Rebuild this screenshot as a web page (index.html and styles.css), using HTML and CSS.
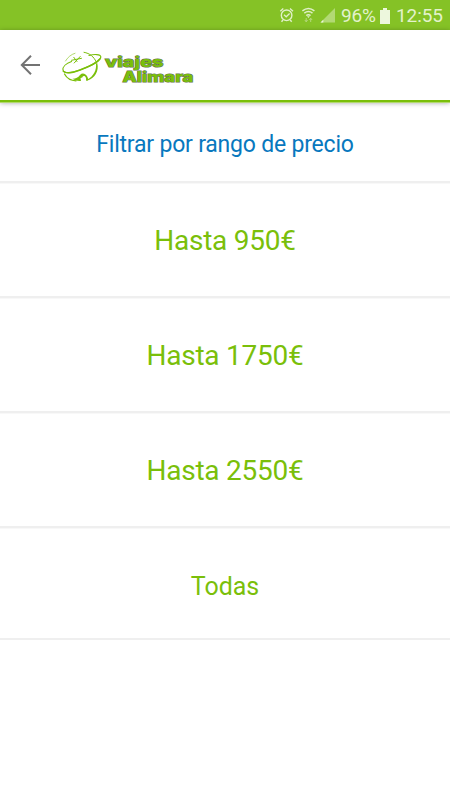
FILE: index.html
```
<!DOCTYPE html>
<html lang="es">
<head>
<meta charset="utf-8">
<title>Viajes Alimara</title>
<link rel="stylesheet" href="styles.css">
</head>
<body>
<div class="status">
  <svg class="status-icons" width="60" height="30" viewBox="278 0 60 30" fill="none" stroke="#e0f0c8">
    <circle cx="286.600" cy="15.300" r="5.300" stroke-width="1.400"/>
    <path d="M280.300 11.300l3-2.700M290 8.600l3 2.700M283 20l-1.500 1.800M290.200 20l1.500 1.800" stroke-width="1.400"/>
    <path d="M284 14.800l2.200 2 3.400-3.300" stroke-width="1.300"/>
    <path d="M302.400 10.800q6-4.800 12 0M304.300 13.200q4.100-3.200 8.200 0M306.200 15.500q2.200-1.700 4.400 0" stroke-width="1.500"/>
    <path d="M307 16.200h2.800l-1.400 1.800z" fill="#e0f0c8" stroke="none"/>
    <path d="M306.200 18v4M304.800 20l1.400 1.800 1.400-1.800M310.700 22v-4M309.300 20l1.400-1.800 1.400 1.800" stroke="#b4d87a" stroke-width="1"/>
    <path d="M335 8v14.500h-14.500z" fill="#b2d974" stroke="none"/>
    <path d="M323.300 19.700v2.800h-2.800z" fill="#eaf5da" stroke="none"/>
  </svg>
  <span class="percent">96%</span>
  <svg class="battery" width="10" height="16" viewBox="0 0 10 16" fill="#edf7dd"><path d="M3 0h4v2h3v14H0V2h3z"/></svg>
  <span class="clock">12:55</span>
</div>
<header class="bar">
  <svg width="210" height="70" viewBox="0 30 210 70">
    <path d="M40 65H21.500M31 55.800L21.800 65l9.200 9.200" fill="none" stroke="#737373" stroke-width="2"/>
    <g fill="none" stroke="#7abf0a" stroke-linecap="round">
      <path d="M71.500 61.500C66 63.500 62.500 67 63 70C63.800 74 72 73 80 70C91 66 101 60.500 100.800 56.800C100.500 54 94 54 89 55.500" stroke-width="1.200"/>
      <path d="M63.300 71.300C66 74.300 73 72.600 80 70C90 66.300 97 62.500 99.800 59" stroke-width="1.500"/>
      <path d="M65.500 61C68 57 71 54.500 75 53.300" stroke-width=".6"/>
      <path d="M64.500 74C67 78.500 71.500 80.700 76 80.800" stroke-width="1.300"/>
      <path d="M84 52.300C90 53.300 94 57 96 61.500" stroke-width="1"/>
      <path d="M71.500 60.300L81.500 58.300M73.800 57.300L77 61.500M74.200 63L80.200 56.500" stroke-width="1"/>
    </g>
    <g fill="#7abf0a">
      <path d="M97.200 63C99.500 71 94.500 78.500 87.500 80.500L87.300 79.500C93.500 76.500 96.800 70 96 63.500z"/>
      <path d="M72.500 78.800Q77 79 80 75Q82.500 72.300 85.500 74.500Q88.500 76.800 88 80.500L86 80.800Q86.500 77 84.500 76Q82.500 75.500 82.300 77.500L80.500 78L81 81Q76 81.500 72.500 78.800z"/>
    </g>
    <g class="wordmark">
      <text x="105" y="66.700" font-size="14.500" textLength="58.500" lengthAdjust="spacingAndGlyphs">viajes</text>
      <text x="122.500" y="82.200" font-size="14" textLength="71" lengthAdjust="spacingAndGlyphs">Alimara</text>
    </g>
  </svg>
</header>
<main>
  <h1 class="heading"><span>Filtrar por rango de precio</span></h1>
  <div class="option"><span>Hasta 950€</span></div>
  <div class="option"><span>Hasta 1750€</span></div>
  <div class="option"><span>Hasta 2550€</span></div>
  <div class="option all"><span>Todas</span></div>
</main>
</body>
</html>
```
FILE: styles.css
```
* { box-sizing: border-box; }
body {
  margin: 0;
  background: #fff;
  font-family: Roboto, "Liberation Sans", sans-serif;
}
svg { display: block; }
.status {
  height: 30px;
  background: #85c226;
  color: #e3f2cc;
  display: flex;
  align-items: center;
  padding-left: 278px;
  font-size: 19px;
  line-height: 30px;
  white-space: nowrap;
}
.percent { width: 39px; margin-left: 3px; padding-top: 1px; letter-spacing: -0.2px; }
.battery { margin-top: 1px; }
.clock { margin-left: 6px; padding-top: 1px; letter-spacing: -0.1px; }
.bar {
  height: 72px;
  border-bottom: 2px solid #7abf0a;
  box-shadow: 0 1px 0 #b3d970, 0 1px 5px rgba(0, 0, 0, 0.35);
}
.wordmark {
  font-family: Inter, "Liberation Sans", sans-serif;
  font-weight: 800;
  fill: #7abf0a;
  stroke: #65724d;
  stroke-width: 1px;
  paint-order: stroke;
}
.heading, .option {
  display: flex;
  align-items: center;
  justify-content: center;
  margin: 0;
  border-bottom: 2px solid #efefef;
  box-shadow: 0 1px 0 #f8f8f8;
  font-weight: 400;
}
.heading {
  height: 81px;
  padding-top: 6px;
  color: #0878be;
  font-size: 23px;
  letter-spacing: -0.2px;
}
.option {
  height: 115px;
  padding-top: 1px;
  color: #7abf0a;
  font-size: 28px;
  letter-spacing: -0.25px;
}
.all {
  height: 112px;
  padding-top: 6px;
  font-size: 25px;
  letter-spacing: 0;
}
```
